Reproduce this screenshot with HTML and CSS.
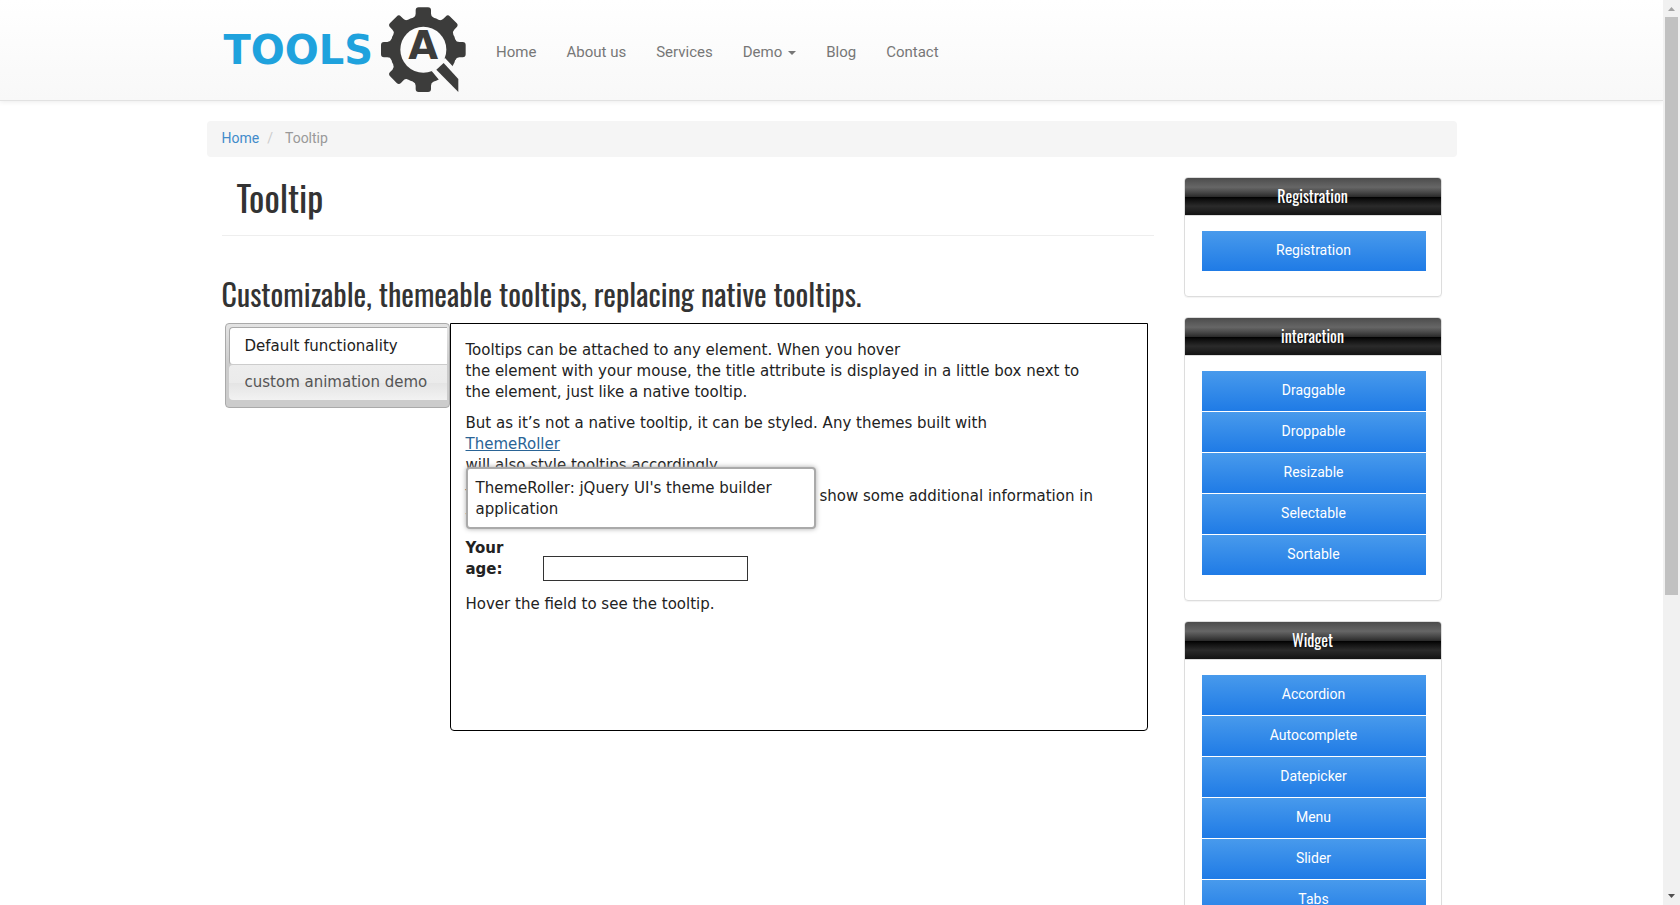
FILE: index.html
```html
<!DOCTYPE html>
<html lang="en">
<head>
<meta charset="utf-8">
<title>Tooltip | Tools QA</title>
<link rel="stylesheet" href="styles.css">
</head>
<body>
<div class="shell">
  <div class="page">
    <header class="navbar">
      <div class="container navbar-inner">
        <a class="brand" href="#">
          <span class="brand-word">TOOLS</span>
          <svg class="brand-gear" viewBox="0 0 255 258" role="img" aria-label="Tools QA">
            <defs>
              <mask id="lens">
                <rect width="255" height="258" fill="#fff"/>
                <circle cx="127" cy="128" r="69" fill="#000"/>
                <path d="M152 192 192 153 220 183 255 220V258H200L175 220Z" fill="#000"/>
              </mask>
              <path id="tooth" d="M97 32Q104 29 104 20V10Q104 1 113 1H141Q150 1 150 10V20Q150 29 158 32L164 60H90Z"/>
            </defs>
            <g fill="#3c3c3b">
              <g mask="url(#lens)">
                <circle cx="127" cy="128" r="101"/>
                <use href="#tooth"/>
                <use href="#tooth" transform="rotate(45 127 128)"/>
                <use href="#tooth" transform="rotate(90 127 128)"/>
                <use href="#tooth" transform="rotate(180 127 128)"/>
                <use href="#tooth" transform="rotate(225 127 128)"/>
                <use href="#tooth" transform="rotate(270 127 128)"/>
                <use href="#tooth" transform="rotate(315 127 128)"/>
              </g>
              <path d="M166 188 188 168 232 216V255Z"/>
              <text class="gear-letter" x="127" y="157" text-anchor="middle">A</text>
            </g>
          </svg>
        </a>
        <nav class="menu">
          <a href="#">Home</a>
          <a href="#">About us</a>
          <a href="#">Services</a>
          <a href="#">Demo<span class="caret"></span></a>
          <a href="#">Blog</a>
          <a href="#">Contact</a>
        </nav>
      </div>
    </header>

    <div class="container">
      <nav class="breadcrumb" aria-label="Breadcrumb">
        <a href="#">Home</a><span class="sep">/</span><span>Tooltip</span>
      </nav>

      <div class="columns">
        <main>
          <h1>Tooltip</h1>
          <h2>Customizable, themeable tooltips, replacing native tooltips.</h2>
          <div class="demo">
            <div class="tabs">
              <button class="tab active" type="button">Default functionality</button>
              <button class="tab" type="button">custom animation demo</button>
            </div>
            <section class="panel">
              <p>Tooltips can be attached to any element. When you hover<br>the element with your mouse, the title attribute is displayed in a little box next to<br>the element, just like a native tooltip.</p>
              <p>But as it’s not a native tooltip, it can be styled. Any themes built with<br><span class="anchor"><a href="#">ThemeRoller</a><span class="tooltip" role="tooltip">ThemeRoller: jQuery UI's theme builder application</span></span><br>will also style tooltips accordingly.</p>
              <p><span class="lead">Tooltips are also useful for form elements, to</span>show some additional information in<br>the context of each field.</p>
              <div class="field">
                <label for="age">Your age:</label>
                <input id="age" type="text">
              </div>
              <p>Hover the field to see the tooltip.</p>
            </section>
          </div>
        </main>

        <aside>
          <section class="box">
            <h3>Registration</h3>
            <ul>
              <li><a href="#">Registration</a></li>
            </ul>
          </section>
          <section class="box">
            <h3>interaction</h3>
            <ul>
              <li><a href="#">Draggable</a></li>
              <li><a href="#">Droppable</a></li>
              <li><a href="#">Resizable</a></li>
              <li><a href="#">Selectable</a></li>
              <li><a href="#">Sortable</a></li>
            </ul>
          </section>
          <section class="box">
            <h3>Widget</h3>
            <ul>
              <li><a href="#">Accordion</a></li>
              <li><a href="#">Autocomplete</a></li>
              <li><a href="#">Datepicker</a></li>
              <li><a href="#">Menu</a></li>
              <li><a href="#">Slider</a></li>
              <li><a href="#">Tabs</a></li>
            </ul>
          </section>
        </aside>
      </div>
    </div>
  </div>
  <div class="scrollbar" aria-hidden="true">
    <svg class="arrow" viewBox="0 0 17 17"><path d="M5 11h7L8.500 7Z" fill="#a3a3a3"/></svg>
    <div class="track"><div class="thumb"></div></div>
    <svg class="arrow" viewBox="0 0 17 17"><path d="M5 6h7L8.500 10Z" fill="#505050"/></svg>
  </div>
</div>
</body>
</html>
```
FILE: styles.css
```css
* { box-sizing: border-box; }
body {
  margin: 0;
  background: #fff;
  color: #333;
  font: 14px/20px Roboto, "Liberation Sans", sans-serif;
}
a { color: #428bca; text-decoration: none; }

.shell { display: grid; grid-template-columns: minmax(0, 1fr) 17px; height: 100vh; }
.page { overflow: hidden; }
.container { max-width: 1250px; margin: 0 auto; }

.navbar {
  border-bottom: 1px solid #e2e2e2;
  background: linear-gradient(#fff, #f8f8f8);
  box-shadow: 0 1px 5px rgba(0, 0, 0, .08);
}
.navbar-inner { display: flex; align-items: center; height: 100px; padding: 0 17px; }
.brand { display: flex; align-items: center; gap: 8px; }
.brand-word { color: #1fa2dd; font: bold 40px/48px "DejaVu Sans", sans-serif; }
.brand-gear { width: 85px; height: 86px; }
.gear-letter { font: bold 116px "DejaVu Sans", sans-serif; }
.menu { display: flex; margin-left: 15px; }
.menu a { padding: 17px 15px 13px; color: #777; font-size: 15px; }
.caret {
  display: inline-block;
  margin-left: 6px;
  border: 4px solid transparent;
  border-top-color: #777;
  border-bottom: 0;
  vertical-align: middle;
}

.breadcrumb {
  display: flex;
  margin: 20px 0;
  padding: 7px 15px 9px;
  border-radius: 4px;
  background: #f5f5f5;
  color: #999;
}
.sep { padding: 0 12px 0 8px; color: #ccc; }

.columns { display: grid; grid-template-columns: minmax(0, 932fr) minmax(0, 258fr); gap: 30px; padding: 0 15px; }
h1, h2, h3 { margin: 0; font-family: Oswald, "Liberation Sans Narrow", "Liberation Sans", sans-serif; font-weight: 400; }
h1 { padding: 0 15px 19px; border-bottom: 1px solid #eee; font-size: 36px; line-height: 39px; }
h2 { margin: 41px 0 13px; font-size: 30px; line-height: 33px; }

.demo {
  display: grid;
  grid-template-columns: 225px minmax(0, 1fr);
  align-items: start;
  padding: 0 6px 0 3px;
  color: #222;
  font: 15px/21px Verdana, "DejaVu Sans", sans-serif;
}
.tabs {
  display: flex;
  flex-direction: column;
  padding: 3px 2px 7px 3px;
  border: 1px solid #aaa;
  border-radius: 4px;
  background: linear-gradient(#e3e3e3, #ccc 50%);
}
.tab {
  height: 35px;
  padding: 0 0 0 16px;
  border: 0;
  border-radius: 4px 0 0 4px;
  background: linear-gradient(#ededed, #ebebeb 50%, #e4e4e4 51%, #f2f2f2);
  color: #555;
  font: inherit;
  text-align: left;
  white-space: nowrap;
}
.tab.active {
  height: 38px;
  padding: 1px 0 0 15px;
  border: solid #aaa;
  border-width: 1px 0 1px 1px;
  border-bottom-color: #ccc;
  background: #fff;
  color: #212121;
}
.panel { min-height: 408px; padding: 16px 15px; border: 1px solid #000; border-radius: 0 0 4px 4px; }
.panel p { margin: 0 0 10px; }
.anchor { position: relative; }
.anchor a { color: #2a6496; text-decoration: underline; }
.tooltip {
  position: absolute;
  top: 32px;
  left: 0;
  z-index: 1;
  width: 350px;
  padding: 9px 8px 7px;
  border: 2px solid #aaa;
  border-radius: 4px;
  background: #fff;
  box-shadow: 0 0 5px #aaa;
}
.lead { display: inline-block; min-width: 354px; }
.field { display: flex; align-items: flex-end; gap: 17px; margin-bottom: 13px; }
.field label { width: 60px; padding-bottom: 1px; font-weight: bold; }
.field input { width: 205px; height: 25px; border: 1px solid #333; background: #fff; font: inherit; }

.box { margin-bottom: 20px; border: 1px solid #ddd; border-radius: 4px; box-shadow: 0 1px 1px rgba(0, 0, 0, .05); overflow: hidden; }
h3 {
  padding: 9px 15px;
  border-bottom: 1px solid #ddd;
  background: linear-gradient(#4c4c4c, #595959 12%, #666 25%, #474747 39%, #2c2c2c 50%, #000 51%, #111 60%, #2b2b2b 76%, #1c1c1c 91%, #131313);
  color: #fff;
  font-size: 16px;
  line-height: 19px;
  text-align: center;
}
.box ul { display: grid; gap: 1px; margin: 0; padding: 15px 15px 25px 17px; list-style: none; }
.box li a {
  display: block;
  padding: 9px 0 11px;
  background: linear-gradient(#489aec, #1f7be6);
  color: #fff;
  text-align: center;
}

.scrollbar { display: flex; flex-direction: column; background: #f1f1f1; }
.arrow { width: 17px; height: 17px; flex: none; }
.track { flex: 1; padding: 0 2px; }
.thumb { height: 66.4%; background: #c1c1c1; }
```
